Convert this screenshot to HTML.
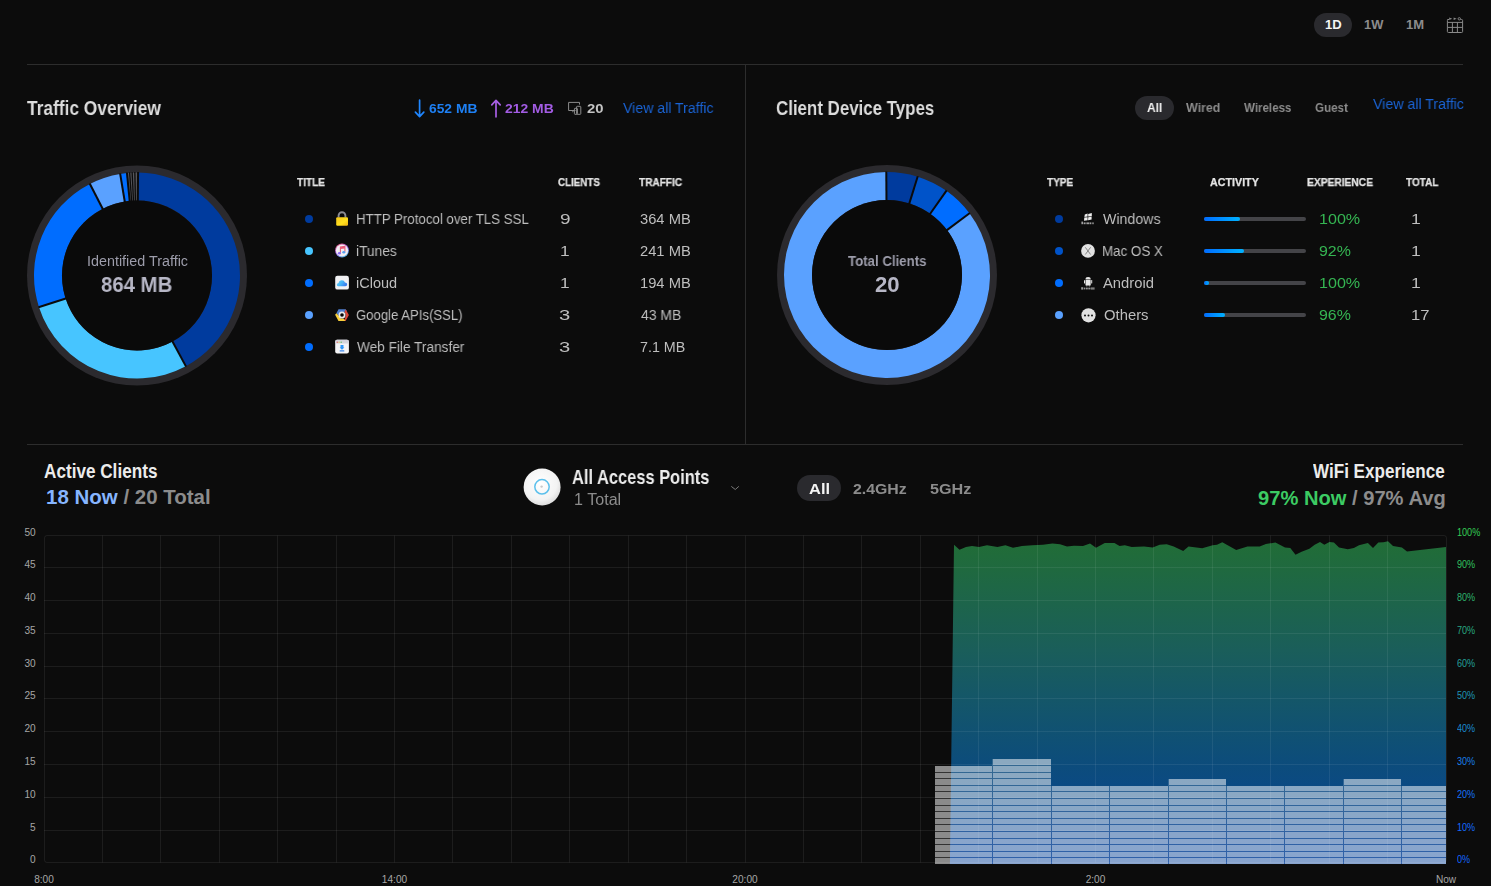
<!DOCTYPE html>
<html><head><meta charset="utf-8"><style>
html,body{margin:0;padding:0;background:#0c0c0c;width:1491px;height:886px;overflow:hidden}
body{position:relative;font-family:"Liberation Sans",sans-serif}
.t{position:absolute;white-space:nowrap;transform-origin:0 0}
.g{will-change:transform}
.hs{-webkit-text-stroke:0.25px #e4e4e4}
.a{position:absolute}
</style></head><body>

<div class="a" style="left:27px;top:64px;width:1436px;height:1px;background:#2d2d2d"></div>
<div class="a" style="left:27px;top:444px;width:1436px;height:1px;background:#2d2d2d"></div>
<div class="a" style="left:745px;top:65px;width:1px;height:379px;background:#2d2d2d"></div>
<div class="a" style="left:1314px;top:13px;width:38px;height:24px;border-radius:12px;background:#2a2a2e"></div>
<div class="a" style="left:1135px;top:96px;width:39px;height:24px;border-radius:12px;background:#2a2a2e"></div>
<div class="a" style="left:797px;top:475px;width:44px;height:26px;border-radius:13px;background:#2a2a2e"></div>
<svg class="a" style="left:22px;top:160px" width="230" height="230" viewBox="22 160 230 230"><circle cx="137.00" cy="275.50" r="110" fill="#2b2a2e"/><path d="M138.079 172.506 A103.000 103.000 0 0 1 185.831 366.189 L172.557 341.536 A75.000 75.000 0 0 0 137.785 200.504 Z" fill="#003b9e"/><path d="M185.831 366.189 A103.000 103.000 0 0 1 38.986 307.158 L65.630 298.552 A75.000 75.000 0 0 0 172.557 341.536 Z" fill="#47c5ff"/><path d="M38.986 307.158 A103.000 103.000 0 0 1 89.919 183.890 L102.718 208.794 A75.000 75.000 0 0 0 65.630 298.552 Z" fill="#006dff"/><path d="M89.919 183.890 A103.000 103.000 0 0 1 120.177 173.883 L124.751 201.507 A75.000 75.000 0 0 0 102.718 208.794 Z" fill="#5aa1ff"/><path d="M120.177 173.883 A103.000 103.000 0 0 1 126.949 172.992 L129.681 200.858 A75.000 75.000 0 0 0 124.751 201.507 Z" fill="#006dff"/><path d="M126.949 172.992 A103.000 103.000 0 0 1 138.079 172.506 L137.785 200.504 A75.000 75.000 0 0 0 129.681 200.858 Z" fill="#56565b"/><line x1="137.775" y1="201.504" x2="138.084" y2="172.006" stroke="#0b0b0b" stroke-width="2.00"/><line x1="172.083" y1="340.655" x2="186.068" y2="366.629" stroke="#0b0b0b" stroke-width="2.00"/><line x1="66.582" y1="298.244" x2="38.510" y2="307.311" stroke="#0b0b0b" stroke-width="2.00"/><line x1="103.175" y1="209.683" x2="89.690" y2="183.445" stroke="#0b0b0b" stroke-width="2.00"/><line x1="124.914" y1="202.494" x2="120.096" y2="173.390" stroke="#0b0b0b" stroke-width="2.00"/><line x1="129.779" y1="201.853" x2="126.900" y2="172.494" stroke="#0b0b0b" stroke-width="2.00"/><line x1="131.709" y1="201.689" x2="129.600" y2="172.265" stroke="#0b0b0b" stroke-width="1.30"/><line x1="133.514" y1="201.582" x2="132.124" y2="172.115" stroke="#0b0b0b" stroke-width="1.30"/><line x1="135.450" y1="201.516" x2="134.832" y2="172.023" stroke="#0b0b0b" stroke-width="1.30"/><circle cx="137.00" cy="275.50" r="75" fill="#0a0a0a"/></svg>
<svg class="a" style="left:772px;top:160px" width="230" height="230" viewBox="772 160 230 230"><circle cx="887.00" cy="275.00" r="110" fill="#2b2a2e"/><path d="M886.281 172.003 A103.000 103.000 0 0 1 917.630 176.660 L909.303 203.393 A75.000 75.000 0 0 0 886.476 200.002 Z" fill="#003b9e"/><path d="M917.630 176.660 A103.000 103.000 0 0 1 946.373 190.834 L930.232 213.714 A75.000 75.000 0 0 0 909.303 203.393 Z" fill="#0053c9"/><path d="M946.373 190.834 A103.000 103.000 0 0 1 969.475 213.301 L947.055 230.073 A75.000 75.000 0 0 0 930.232 213.714 Z" fill="#006dff"/><path d="M969.475 213.301 A103.000 103.000 0 1 1 886.281 172.003 L886.476 200.002 A75.000 75.000 0 1 0 947.055 230.073 Z" fill="#5aa1ff"/><line x1="886.483" y1="201.002" x2="886.277" y2="171.503" stroke="#0b0b0b" stroke-width="2.00"/><line x1="909.006" y1="204.348" x2="917.778" y2="176.182" stroke="#0b0b0b" stroke-width="2.00"/><line x1="929.656" y1="214.531" x2="946.661" y2="190.426" stroke="#0b0b0b" stroke-width="2.00"/><line x1="946.254" y1="230.672" x2="969.876" y2="213.001" stroke="#0b0b0b" stroke-width="2.00"/><circle cx="887.00" cy="275.00" r="75" fill="#0a0a0a"/></svg>
<div class="a" style="left:305px;top:215px;width:8px;height:8px;border-radius:50%;background:#003b9e"></div>
<div class="a" style="left:305px;top:247px;width:8px;height:8px;border-radius:50%;background:#47c5ff"></div>
<div class="a" style="left:305px;top:279px;width:8px;height:8px;border-radius:50%;background:#006dff"></div>
<div class="a" style="left:305px;top:311px;width:8px;height:8px;border-radius:50%;background:#5aa1ff"></div>
<div class="a" style="left:305px;top:343px;width:8px;height:8px;border-radius:50%;background:#006dff"></div>
<div class="a" style="left:1055px;top:215px;width:8px;height:8px;border-radius:50%;background:#003b9e"></div>
<div class="a" style="left:1055px;top:247px;width:8px;height:8px;border-radius:50%;background:#0053c9"></div>
<div class="a" style="left:1055px;top:279px;width:8px;height:8px;border-radius:50%;background:#006dff"></div>
<div class="a" style="left:1055px;top:311px;width:8px;height:8px;border-radius:50%;background:#5aa1ff"></div>
<div class="a" style="left:1204px;top:217px;width:102px;height:4px;border-radius:2px;background:#444448"></div>
<div class="a" style="left:1204px;top:217px;width:36px;height:4px;border-radius:2px;background:linear-gradient(90deg,#006cff,#00b2ff)"></div>
<div class="a" style="left:1204px;top:249px;width:102px;height:4px;border-radius:2px;background:#444448"></div>
<div class="a" style="left:1204px;top:249px;width:40px;height:4px;border-radius:2px;background:linear-gradient(90deg,#006cff,#00b2ff)"></div>
<div class="a" style="left:1204px;top:281px;width:102px;height:4px;border-radius:2px;background:#444448"></div>
<div class="a" style="left:1204px;top:281px;width:5px;height:4px;border-radius:2px;background:linear-gradient(90deg,#006cff,#00b2ff)"></div>
<div class="a" style="left:1204px;top:313px;width:102px;height:4px;border-radius:2px;background:#444448"></div>
<div class="a" style="left:1204px;top:313px;width:21px;height:4px;border-radius:2px;background:linear-gradient(90deg,#006cff,#00b2ff)"></div>
<svg class="a" style="left:0;top:0" width="1491" height="886" viewBox="0 0 1491 886"><defs><linearGradient id="ag" x1="0" y1="541" x2="0" y2="862" gradientUnits="userSpaceOnUse"><stop offset="0" stop-color="#216d36"/><stop offset="0.34" stop-color="#1a5e5a"/><stop offset="0.7" stop-color="#0c4c7c"/><stop offset="1" stop-color="#08429a"/></linearGradient></defs><path d="M949.9 864 L954.0 544.8 L959.5 549.7 L966.0 547.0 L972.0 546.0 L979.0 547.0 L987.0 545.3 L997.5 547.0 L1005.4 545.3 L1013.0 547.8 L1022.0 546.0 L1032.4 545.2 L1043.0 544.8 L1052.5 543.6 L1060.0 544.3 L1067.0 546.6 L1074.0 545.7 L1083.0 546.0 L1090.0 543.6 L1096.0 547.8 L1104.8 543.0 L1114.4 543.0 L1119.6 546.0 L1124.8 545.3 L1131.8 547.0 L1144.0 546.6 L1152.7 547.4 L1159.7 544.8 L1166.7 544.3 L1173.7 546.6 L1183.2 551.0 L1188.5 546.6 L1202.2 548.3 L1212.7 545.3 L1217.0 544.8 L1222.3 542.2 L1236.2 550.0 L1247.5 546.6 L1259.7 546.6 L1265.9 544.0 L1275.4 542.6 L1285.0 547.4 L1290.3 548.0 L1295.5 554.8 L1301.6 551.8 L1309.4 548.8 L1314.7 544.8 L1320.0 541.9 L1324.3 544.8 L1329.5 541.9 L1333.9 542.6 L1339.0 547.4 L1347.8 549.2 L1353.9 548.0 L1359.0 545.3 L1367.9 543.0 L1373.0 548.0 L1378.3 542.6 L1383.5 542.2 L1388.0 541.3 L1393.0 546.0 L1401.9 547.4 L1407.0 551.4 L1446.0 546.9 L1446 864 Z" fill="url(#ag)"/><path d="M935 766H992V864H935ZM992 759H1051V864H992ZM1051 786H1109V864H1051ZM1109 786H1168V864H1109ZM1168 779H1226V864H1168ZM1226 786H1284V864H1226ZM1284 786H1343V864H1284ZM1343 779H1401V864H1343ZM1401 786H1446V864H1401Z" fill="#ffffff" fill-opacity="0.16"/><path d="M935 858H992V864H935ZM935 852H992V857H935ZM935 845H992V851H935ZM935 839H992V844H935ZM935 832H992V838H935ZM935 825H992V831H935ZM935 819H992V824H935ZM935 812H992V818H935ZM935 806H992V811H935ZM935 799H992V805H935ZM935 792H992V798H935ZM935 786H992V791H935ZM935 779H992V785H935ZM935 773H992V778H935ZM935 766H992V772H935ZM993 858H1051V864H993ZM993 852H1051V857H993ZM993 845H1051V851H993ZM993 839H1051V844H993ZM993 832H1051V838H993ZM993 825H1051V831H993ZM993 819H1051V824H993ZM993 812H1051V818H993ZM993 806H1051V811H993ZM993 799H1051V805H993ZM993 792H1051V798H993ZM993 786H1051V791H993ZM993 779H1051V785H993ZM993 773H1051V778H993ZM993 766H1051V772H993ZM993 759H1051V765H993ZM1052 858H1109V864H1052ZM1052 852H1109V857H1052ZM1052 845H1109V851H1052ZM1052 839H1109V844H1052ZM1052 832H1109V838H1052ZM1052 825H1109V831H1052ZM1052 819H1109V824H1052ZM1052 812H1109V818H1052ZM1052 806H1109V811H1052ZM1052 799H1109V805H1052ZM1052 792H1109V798H1052ZM1052 786H1109V791H1052ZM1110 858H1168V864H1110ZM1110 852H1168V857H1110ZM1110 845H1168V851H1110ZM1110 839H1168V844H1110ZM1110 832H1168V838H1110ZM1110 825H1168V831H1110ZM1110 819H1168V824H1110ZM1110 812H1168V818H1110ZM1110 806H1168V811H1110ZM1110 799H1168V805H1110ZM1110 792H1168V798H1110ZM1110 786H1168V791H1110ZM1169 858H1226V864H1169ZM1169 852H1226V857H1169ZM1169 845H1226V851H1169ZM1169 839H1226V844H1169ZM1169 832H1226V838H1169ZM1169 825H1226V831H1169ZM1169 819H1226V824H1169ZM1169 812H1226V818H1169ZM1169 806H1226V811H1169ZM1169 799H1226V805H1169ZM1169 792H1226V798H1169ZM1169 786H1226V791H1169ZM1169 779H1226V785H1169ZM1227 858H1284V864H1227ZM1227 852H1284V857H1227ZM1227 845H1284V851H1227ZM1227 839H1284V844H1227ZM1227 832H1284V838H1227ZM1227 825H1284V831H1227ZM1227 819H1284V824H1227ZM1227 812H1284V818H1227ZM1227 806H1284V811H1227ZM1227 799H1284V805H1227ZM1227 792H1284V798H1227ZM1227 786H1284V791H1227ZM1285 858H1343V864H1285ZM1285 852H1343V857H1285ZM1285 845H1343V851H1285ZM1285 839H1343V844H1285ZM1285 832H1343V838H1285ZM1285 825H1343V831H1285ZM1285 819H1343V824H1285ZM1285 812H1343V818H1285ZM1285 806H1343V811H1285ZM1285 799H1343V805H1285ZM1285 792H1343V798H1285ZM1285 786H1343V791H1285ZM1344 858H1401V864H1344ZM1344 852H1401V857H1344ZM1344 845H1401V851H1344ZM1344 839H1401V844H1344ZM1344 832H1401V838H1344ZM1344 825H1401V831H1344ZM1344 819H1401V824H1344ZM1344 812H1401V818H1344ZM1344 806H1401V811H1344ZM1344 799H1401V805H1344ZM1344 792H1401V798H1344ZM1344 786H1401V791H1344ZM1344 779H1401V785H1344ZM1402 858H1446V864H1402ZM1402 852H1446V857H1402ZM1402 845H1446V851H1402ZM1402 839H1446V844H1402ZM1402 832H1446V838H1402ZM1402 825H1446V831H1402ZM1402 819H1446V824H1402ZM1402 812H1446V818H1402ZM1402 806H1446V811H1402ZM1402 799H1446V805H1402ZM1402 792H1446V798H1402ZM1402 786H1446V791H1402Z" fill="#ffffff" fill-opacity="0.43"/><path d="M44.00 567.50H1446.00M44.00 600.50H1446.00M44.00 633.50H1446.00M44.00 666.50H1446.00M44.00 698.50H1446.00M44.00 731.50H1446.00M44.00 764.50H1446.00M44.00 797.50H1446.00M44.00 830.50H1446.00M102.50 535.50V862.50M160.50 535.50V862.50M219.50 535.50V862.50M277.50 535.50V862.50M336.50 535.50V862.50M394.50 535.50V862.50M452.50 535.50V862.50M511.50 535.50V862.50M569.50 535.50V862.50M628.50 535.50V862.50M686.50 535.50V862.50M745.50 535.50V862.50M803.50 535.50V862.50M861.50 535.50V862.50M920.50 535.50V862.50M978.50 535.50V862.50M1037.50 535.50V862.50M1095.50 535.50V862.50M1153.50 535.50V862.50M1212.50 535.50V862.50M1270.50 535.50V862.50M1329.50 535.50V862.50M1387.50 535.50V862.50" stroke="#ffffff" stroke-opacity="0.07" stroke-width="1" fill="none"/><rect x="44.50" y="535.50" width="1402.00" height="327.00" rx="2.5" fill="none" stroke="#ffffff" stroke-width="1" stroke-opacity="0.07"/></svg>
<div style="font-size:10.1px;line-height:12px;position:absolute;white-space:nowrap;right:1455.4px;top:527px;color:#a6a6a6">50</div>
<div style="font-size:10.1px;line-height:12px;position:absolute;white-space:nowrap;right:1455.4px;top:559px;color:#a6a6a6">45</div>
<div style="font-size:10.1px;line-height:12px;position:absolute;white-space:nowrap;right:1455.4px;top:592px;color:#a6a6a6">40</div>
<div style="font-size:10.1px;line-height:12px;position:absolute;white-space:nowrap;right:1455.4px;top:625px;color:#a6a6a6">35</div>
<div style="font-size:10.1px;line-height:12px;position:absolute;white-space:nowrap;right:1455.4px;top:658px;color:#a6a6a6">30</div>
<div style="font-size:10.1px;line-height:12px;position:absolute;white-space:nowrap;right:1455.4px;top:690px;color:#a6a6a6">25</div>
<div style="font-size:10.1px;line-height:12px;position:absolute;white-space:nowrap;right:1455.4px;top:723px;color:#a6a6a6">20</div>
<div style="font-size:10.1px;line-height:12px;position:absolute;white-space:nowrap;right:1455.4px;top:756px;color:#a6a6a6">15</div>
<div style="font-size:10.1px;line-height:12px;position:absolute;white-space:nowrap;right:1455.4px;top:789px;color:#a6a6a6">10</div>
<div style="font-size:10.1px;line-height:12px;position:absolute;white-space:nowrap;right:1455.4px;top:822px;color:#a6a6a6">5</div>
<div style="font-size:10.1px;line-height:12px;position:absolute;white-space:nowrap;right:1455.4px;top:854px;color:#a6a6a6">0</div>
<div style="font-size:10.1px;line-height:12px;position:absolute;white-space:nowrap;left:1457px;top:527px;color:#34cc55;transform:scaleX(0.9);transform-origin:0 0">100%</div>
<div style="font-size:10.1px;line-height:12px;position:absolute;white-space:nowrap;left:1457px;top:559px;color:#30c060;transform:scaleX(0.9);transform-origin:0 0">90%</div>
<div style="font-size:10.1px;line-height:12px;position:absolute;white-space:nowrap;left:1457px;top:592px;color:#2cb36e;transform:scaleX(0.9);transform-origin:0 0">80%</div>
<div style="font-size:10.1px;line-height:12px;position:absolute;white-space:nowrap;left:1457px;top:625px;color:#28a782;transform:scaleX(0.9);transform-origin:0 0">70%</div>
<div style="font-size:10.1px;line-height:12px;position:absolute;white-space:nowrap;left:1457px;top:658px;color:#229e9a;transform:scaleX(0.9);transform-origin:0 0">60%</div>
<div style="font-size:10.1px;line-height:12px;position:absolute;white-space:nowrap;left:1457px;top:690px;color:#1e95b6;transform:scaleX(0.9);transform-origin:0 0">50%</div>
<div style="font-size:10.1px;line-height:12px;position:absolute;white-space:nowrap;left:1457px;top:723px;color:#1a89d2;transform:scaleX(0.9);transform-origin:0 0">40%</div>
<div style="font-size:10.1px;line-height:12px;position:absolute;white-space:nowrap;left:1457px;top:756px;color:#187de8;transform:scaleX(0.9);transform-origin:0 0">30%</div>
<div style="font-size:10.1px;line-height:12px;position:absolute;white-space:nowrap;left:1457px;top:789px;color:#1672f8;transform:scaleX(0.9);transform-origin:0 0">20%</div>
<div style="font-size:10.1px;line-height:12px;position:absolute;white-space:nowrap;left:1457px;top:822px;color:#146aff;transform:scaleX(0.9);transform-origin:0 0">10%</div>
<div style="font-size:10.1px;line-height:12px;position:absolute;white-space:nowrap;left:1457px;top:854px;color:#1264ff;transform:scaleX(0.9);transform-origin:0 0">0%</div>
<div style="font-size:10.1px;line-height:12px;position:absolute;white-space:nowrap;left:14.0px;top:874px;width:60px;text-align:center;color:#a6a6a6">8:00</div>
<div style="font-size:10.1px;line-height:12px;position:absolute;white-space:nowrap;left:364.5px;top:874px;width:60px;text-align:center;color:#a6a6a6">14:00</div>
<div style="font-size:10.1px;line-height:12px;position:absolute;white-space:nowrap;left:715.0px;top:874px;width:60px;text-align:center;color:#a6a6a6">20:00</div>
<div style="font-size:10.1px;line-height:12px;position:absolute;white-space:nowrap;left:1065.5px;top:874px;width:60px;text-align:center;color:#a6a6a6">2:00</div>
<div style="font-size:10.1px;line-height:12px;position:absolute;white-space:nowrap;left:1416.0px;top:874px;width:60px;text-align:center;color:#a6a6a6">Now</div>
<svg class="a" style="left:1444px;top:14px" width="22" height="22" viewBox="0 0 22 22"><g fill="none" stroke="#8a8a8a" stroke-width="1"><path d="M5 5.5H3.5Q3.4 5.5 3.4 6.6V17.6Q3.4 18.5 4.5 18.5H17.6Q18.6 18.5 18.6 17.5V6.5Q18.6 5.5 17.6 5.5H16.5"/><path d="M4 8.4H18.5M4 13.4H18.5M8.4 8.4V18.4M13.4 8.4V18.4"/></g><g fill="#8a8a8a"><path d="M5.2 3.6L8.2 4.7L5.2 5.9Z"/><path d="M9.6 3.6L12.6 4.7L9.6 5.9Z"/><circle cx="15.3" cy="4.8" r="1.2" fill="none" stroke="#8a8a8a" stroke-width="0.9"/></g></svg>
<svg class="a" style="left:410px;top:96px" width="20" height="24" viewBox="0 0 20 24"><path d="M9.6 4.2V20.4M5.4 16.2L9.6 20.6L13.8 16.2" fill="none" stroke="#1f86ff" stroke-width="1.7" stroke-linecap="round" stroke-linejoin="round"/></svg>
<svg class="a" style="left:486px;top:96px" width="20" height="24" viewBox="0 0 20 24"><path d="M10 20.8V4.6M5.8 8.8L10 4.4L14.2 8.8" fill="none" stroke="#a95fe6" stroke-width="1.7" stroke-linecap="round" stroke-linejoin="round"/></svg>
<svg class="a" style="left:564px;top:98px" width="22" height="22" viewBox="0 0 22 22"><g fill="none" stroke="#8c8c8c" stroke-width="1"><path d="M11.5 12.5H4.6V4.4H15.5V6.6"/><path d="M8.6 14.2L9.2 12.8"/><rect x="10.4" y="10.3" width="3" height="6" rx="0.6"/><rect x="12.6" y="8.3" width="4.2" height="8" rx="0.6"/></g></svg>
<svg class="a" style="left:332px;top:208px" width="20" height="20" viewBox="0 0 20 20"><path d="M6.6 9.6V7.6A3.4 3.4 0 0 1 13.4 7.6V9.6" fill="none" stroke="#8b8b92" stroke-width="1.9"/><defs><linearGradient id="lk" x1="0" y1="0" x2="1" y2="1"><stop offset="0" stop-color="#f8c81a"/><stop offset="0.6" stop-color="#ffe01e"/><stop offset="1" stop-color="#f0b010"/></linearGradient></defs><rect x="4.2" y="9.2" width="11.8" height="8.6" rx="1.2" fill="url(#lk)"/></svg>
<svg class="a" style="left:332px;top:240px" width="20" height="20" viewBox="0 0 20 20"><defs><linearGradient id="it" x1="0.2" y1="0" x2="0.8" y2="1"><stop offset="0" stop-color="#f06080"/><stop offset="0.5" stop-color="#9a60f0"/><stop offset="1" stop-color="#40c0e0"/></linearGradient></defs><circle cx="10" cy="10.5" r="6.9" fill="url(#it)"/><circle cx="10" cy="10.5" r="6.1" fill="#f2eef4"/><path d="M8.4 12.8V6.9L12.9 6.3V11.8" fill="none" stroke="#e5607a" stroke-width="1.1"/><path d="M8.2 7.2L12.9 6.5V8.5L8.4 9.1Z" fill="#ee5a78"/><ellipse cx="7.4" cy="13.2" rx="1.5" ry="1.2" fill="#8a68f4"/><ellipse cx="11.8" cy="12.2" rx="1.5" ry="1.2" fill="#58a0f0"/></svg>
<svg class="a" style="left:332px;top:272px" width="20" height="20" viewBox="0 0 20 20"><defs><linearGradient id="ic" x1="0" y1="0" x2="1" y2="0.4"><stop offset="0" stop-color="#6ad0f8"/><stop offset="0.5" stop-color="#46b8f8"/><stop offset="1" stop-color="#3a7ff0"/></linearGradient></defs><rect x="3.2" y="3.8" width="13.7" height="13.8" rx="2.2" fill="#f1f1f3"/><path d="M6.2 14.2Q4.6 14.2 4.8 12.5Q5 11.2 6.6 11.1Q7 8.4 9.9 8.3Q12.2 8.3 13 10.6Q15.2 10.6 15.2 12.4Q15.2 14.2 13.3 14.2Z" fill="url(#ic)"/></svg>
<svg class="a" style="left:332px;top:304px" width="20" height="20" viewBox="0 0 20 20"><path d="M6.5 5.2H13.6L15.2 7.6L11.4 7.9L8.7 8.4L6.4 11.2L4.4 9.2Z" fill="#4e7fd0"/><path d="M13.6 5.2L16.9 11L13.6 16.9H11.4L12.9 14.5L13.9 11L12.6 7.9Z" fill="#d84638"/><path d="M3.1 10.8L4.4 9.2L6.6 11.6L8.8 14.6L11.4 14.5L13.4 16.9H6.5Z" fill="#f9cf3a"/><circle cx="10" cy="11" r="3.5" fill="#e8e8ea"/><circle cx="10" cy="11" r="1.8" fill="#050505"/></svg>
<svg class="a" style="left:332px;top:336px" width="20" height="20" viewBox="0 0 20 20"><rect x="3.2" y="3.8" width="13.7" height="13.8" rx="2" fill="#f4f4f6"/><rect x="3.2" y="3.8" width="13.7" height="3.6" rx="1.5" fill="#d4d4dc"/><circle cx="5.3" cy="6.3" r="0.8" fill="#e57373"/><circle cx="7.2" cy="6.3" r="0.8" fill="#e8d070"/><circle cx="9.2" cy="6.3" r="0.8" fill="#70c070"/><path d="M8.5 9H11.5V11.6H12.4L10 13.8L7.6 11.6H8.5Z" fill="#2f96f6"/><rect x="7.6" y="14.3" width="4.8" height="1.1" rx="0.5" fill="#3a88f0"/></svg>
<svg class="a" style="left:1078px;top:208px" width="20" height="20" viewBox="0 0 20 20"><path d="M6.8 6.4L9.6 5.6V8.6L6.4 9Z M10.2 5.9L13.8 5V8.2L10.2 8.6Z M6.3 9.6L9.6 9.2V12.2L6 12.7Z M10.2 9.2L13.6 8.8V11.6L10.1 12.2Z" fill="#f0f0f0"/><g fill="#a0a0a0"><rect x="3.4" y="13.6" width="1.6" height="2.6"/><rect x="5.6" y="14.4" width="1.4" height="1.8"/><rect x="7.4" y="14.4" width="1.2" height="1.8"/><rect x="9" y="14.4" width="2" height="1.8"/><rect x="11.5" y="14.4" width="1.6" height="1.8"/><rect x="13.6" y="14.4" width="2.4" height="1.8" opacity="0.7"/></g></svg>
<svg class="a" style="left:1078px;top:240px" width="20" height="20" viewBox="0 0 20 20"><circle cx="10" cy="10.9" r="6.9" fill="#e2e2e2"/><path d="M7.3 7.3L12.6 14.5M12.6 7.3L7.3 14.5" stroke="#7a7a7a" stroke-width="0.9"/></svg>
<svg class="a" style="left:1078px;top:272px" width="20" height="20" viewBox="0 0 20 20"><path d="M7.5 7.4A2.6 2.4 0 0 1 12.7 7.4Z" fill="#e8e8e8"/><rect x="7.5" y="8" width="5.2" height="5.6" rx="0.5" fill="#e8e8e8"/><rect x="6" y="8" width="1" height="3.6" rx="0.5" fill="#e8e8e8"/><rect x="13.2" y="8" width="1" height="3.6" rx="0.5" fill="#e8e8e8"/><rect x="8.3" y="13.2" width="1" height="1.2" fill="#bbb"/><rect x="10.9" y="13.2" width="1" height="1.2" fill="#bbb"/><g fill="#9a9a9a"><rect x="3.2" y="15.2" width="2" height="2.4"/><rect x="5.8" y="15.6" width="1.6" height="1.8"/><rect x="8" y="15.6" width="1.8" height="1.8"/><rect x="10.3" y="15.6" width="2.2" height="1.8"/><rect x="13" y="15.4" width="3.6" height="2.2" opacity="0.8"/></g></svg>
<svg class="a" style="left:1078px;top:304px" width="20" height="20" viewBox="0 0 20 20"><circle cx="10.5" cy="11.3" r="7.1" fill="#e2e2e2"/><circle cx="7" cy="11.5" r="1" fill="#111"/><circle cx="10.5" cy="11.5" r="1" fill="#111"/><circle cx="14" cy="11.5" r="1" fill="#111"/></svg>
<svg class="a" style="left:518px;top:463px" width="48" height="48" viewBox="0 0 48 48"><defs><radialGradient id="ap" cx="0.45" cy="0.4" r="0.6"><stop offset="0" stop-color="#ffffff"/><stop offset="0.75" stop-color="#f3f3f3"/><stop offset="1" stop-color="#dedede"/></radialGradient></defs><circle cx="24.1" cy="24" r="18.5" fill="url(#ap)"/><circle cx="24" cy="23.8" r="7.2" fill="none" stroke="#5cc0ec" stroke-width="1.5"/><circle cx="23.6" cy="23.6" r="1.2" fill="#c8c8c8"/></svg>
<svg class="a" style="left:725px;top:478px" width="20" height="20" viewBox="0 0 20 20"><path d="M6.3 8.4L10.3 11.5L13.8 8.4" fill="none" stroke="#7a7a7a" stroke-width="1"/></svg>
<div class="t" style="left:1324.93px;top:19.00px;font-size:12.209px;line-height:12.209px;font-weight:700;color:#f4f4f4;transform:scaleX(1.0714)">1D</div>
<div class="t" style="left:1363.94px;top:19.00px;font-size:12.209px;line-height:12.209px;font-weight:700;color:#8c8c8c;transform:scaleX(1.0588)">1W</div>
<div class="t" style="left:1405.93px;top:19.00px;font-size:12.209px;line-height:12.209px;font-weight:700;color:#8c8c8c;transform:scaleX(1.0667)">1M</div>
<div class="t g" style="left:27.00px;top:98.00px;font-size:20.640px;line-height:20.640px;font-weight:700;color:#dcdcdc;transform:scaleX(0.8403)">Traffic Overview</div>
<div class="t g" style="left:429.20px;top:102.00px;font-size:13.517px;line-height:13.517px;font-weight:700;color:#1e80f4;transform:scaleX(1.0234)">652 MB</div>
<div class="t g" style="left:505.00px;top:102.00px;font-size:13.517px;line-height:13.517px;font-weight:700;color:#a35ce4;transform:scaleX(1.0298)">212 MB</div>
<div class="t g" style="left:587.00px;top:102.00px;font-size:13.517px;line-height:13.517px;font-weight:700;color:#c4c4c4;transform:scaleX(1.1000)">20</div>
<div class="t g" style="left:623.30px;top:101.00px;font-size:14.826px;line-height:14.826px;font-weight:400;color:#1a63d4;transform:scaleX(0.9532)">View all Traffic</div>
<div class="t g" style="left:776.18px;top:98.00px;font-size:20.640px;line-height:20.640px;font-weight:700;color:#dcdcdc;transform:scaleX(0.8188)">Client Device Types</div>
<div class="t g" style="left:1147.00px;top:102.00px;font-size:12.791px;line-height:12.791px;font-weight:700;color:#f4f4f4;transform:scaleX(0.9375)">All</div>
<div class="t g" style="left:1186.00px;top:102.00px;font-size:12.791px;line-height:12.791px;font-weight:700;color:#8c8c8c;transform:scaleX(0.9714)">Wired</div>
<div class="t g" style="left:1244.40px;top:102.00px;font-size:12.791px;line-height:12.791px;font-weight:700;color:#8c8c8c;transform:scaleX(0.9038)">Wireless</div>
<div class="t g" style="left:1315.00px;top:102.00px;font-size:12.791px;line-height:12.791px;font-weight:700;color:#8c8c8c;transform:scaleX(0.9083)">Guest</div>
<div class="t g" style="left:1373.00px;top:97.00px;font-size:14.826px;line-height:14.826px;font-weight:400;color:#1a63d4;transform:scaleX(0.9574)">View all Traffic</div>
<div class="t g hs" style="left:297.30px;top:178.00px;font-size:10.465px;line-height:10.465px;font-weight:700;color:#e4e4e4;transform:scaleX(0.9621)">TITLE</div>
<div class="t g hs" style="left:558.00px;top:178.00px;font-size:10.465px;line-height:10.465px;font-weight:700;color:#e4e4e4;transform:scaleX(0.9378)">CLIENTS</div>
<div class="t g hs" style="left:638.70px;top:178.00px;font-size:10.465px;line-height:10.465px;font-weight:700;color:#e4e4e4;transform:scaleX(0.9614)">TRAFFIC</div>
<div class="t g hs" style="left:1047.40px;top:178.00px;font-size:10.465px;line-height:10.465px;font-weight:700;color:#e4e4e4;transform:scaleX(0.9593)">TYPE</div>
<div class="t g hs" style="left:1210.00px;top:178.00px;font-size:10.465px;line-height:10.465px;font-weight:700;color:#e4e4e4;transform:scaleX(1.0250)">ACTIVITY</div>
<div class="t g hs" style="left:1307.22px;top:178.00px;font-size:10.465px;line-height:10.465px;font-weight:700;color:#e4e4e4;transform:scaleX(0.9788)">EXPERIENCE</div>
<div class="t g hs" style="left:1406.00px;top:178.00px;font-size:10.465px;line-height:10.465px;font-weight:700;color:#e4e4e4;transform:scaleX(0.9559)">TOTAL</div>
<div class="t g" style="left:356.07px;top:212.00px;font-size:14.244px;line-height:14.244px;font-weight:400;color:#bebebe;transform:scaleX(0.9321)">HTTP Protocol over TLS SSL</div>
<div class="t g" style="left:559.67px;top:212.00px;font-size:14.244px;line-height:14.244px;font-weight:400;color:#bebebe;transform:scaleX(1.3333)">9</div>
<div class="t g" style="left:640.27px;top:212.00px;font-size:14.244px;line-height:14.244px;font-weight:400;color:#bebebe;transform:scaleX(1.0340)">364 MB</div>
<div class="t g" style="left:356.03px;top:244.00px;font-size:14.244px;line-height:14.244px;font-weight:400;color:#bebebe;transform:scaleX(0.9659)">iTunes</div>
<div class="t g" style="left:560.08px;top:244.00px;font-size:14.244px;line-height:14.244px;font-weight:400;color:#bebebe;transform:scaleX(1.2167)">1</div>
<div class="t g" style="left:640.27px;top:244.00px;font-size:14.244px;line-height:14.244px;font-weight:400;color:#bebebe;transform:scaleX(1.0340)">241 MB</div>
<div class="t g" style="left:355.98px;top:276.00px;font-size:14.244px;line-height:14.244px;font-weight:400;color:#bebebe;transform:scaleX(1.0205)">iCloud</div>
<div class="t g" style="left:560.08px;top:276.00px;font-size:14.244px;line-height:14.244px;font-weight:400;color:#bebebe;transform:scaleX(1.2167)">1</div>
<div class="t g" style="left:640.27px;top:276.00px;font-size:14.244px;line-height:14.244px;font-weight:400;color:#bebebe;transform:scaleX(1.0340)">194 MB</div>
<div class="t g" style="left:356.08px;top:308.00px;font-size:14.244px;line-height:14.244px;font-weight:400;color:#bebebe;transform:scaleX(0.9228)">Google APIs(SSL)</div>
<div class="t g" style="left:559.28px;top:308.00px;font-size:14.244px;line-height:14.244px;font-weight:400;color:#bebebe;transform:scaleX(1.4167)">3</div>
<div class="t g" style="left:641.30px;top:308.00px;font-size:14.244px;line-height:14.244px;font-weight:400;color:#bebebe;transform:scaleX(0.9780)">43 MB</div>
<div class="t g" style="left:357.00px;top:340.00px;font-size:14.244px;line-height:14.244px;font-weight:400;color:#bebebe;transform:scaleX(0.9580)">Web File Transfer</div>
<div class="t g" style="left:559.28px;top:340.00px;font-size:14.244px;line-height:14.244px;font-weight:400;color:#bebebe;transform:scaleX(1.4167)">3</div>
<div class="t g" style="left:640.30px;top:340.00px;font-size:14.244px;line-height:14.244px;font-weight:400;color:#bebebe;transform:scaleX(1.0047)">7.1 MB</div>
<div class="t g" style="left:1103.00px;top:212.00px;font-size:14.244px;line-height:14.244px;font-weight:400;color:#bebebe;transform:scaleX(0.9948)">Windows</div>
<div class="t g" style="left:1318.87px;top:212.00px;font-size:14.244px;line-height:14.244px;font-weight:400;color:#35b552;transform:scaleX(1.1314)">100%</div>
<div class="t g" style="left:1411.17px;top:212.00px;font-size:14.244px;line-height:14.244px;font-weight:400;color:#bebebe;transform:scaleX(1.2333)">1</div>
<div class="t g" style="left:1102.26px;top:244.00px;font-size:14.244px;line-height:14.244px;font-weight:400;color:#bebebe;transform:scaleX(0.9397)">Mac OS X</div>
<div class="t g" style="left:1318.88px;top:244.00px;font-size:14.244px;line-height:14.244px;font-weight:400;color:#35b552;transform:scaleX(1.1185)">92%</div>
<div class="t g" style="left:1411.17px;top:244.00px;font-size:14.244px;line-height:14.244px;font-weight:400;color:#bebebe;transform:scaleX(1.2333)">1</div>
<div class="t g" style="left:1103.00px;top:276.00px;font-size:14.244px;line-height:14.244px;font-weight:400;color:#bebebe;transform:scaleX(1.0396)">Android</div>
<div class="t g" style="left:1318.87px;top:276.00px;font-size:14.244px;line-height:14.244px;font-weight:400;color:#35b552;transform:scaleX(1.1314)">100%</div>
<div class="t g" style="left:1411.17px;top:276.00px;font-size:14.244px;line-height:14.244px;font-weight:400;color:#bebebe;transform:scaleX(1.2333)">1</div>
<div class="t g" style="left:1104.26px;top:308.00px;font-size:14.244px;line-height:14.244px;font-weight:400;color:#bebebe;transform:scaleX(1.0415)">Others</div>
<div class="t g" style="left:1318.88px;top:308.00px;font-size:14.244px;line-height:14.244px;font-weight:400;color:#35b552;transform:scaleX(1.1185)">96%</div>
<div class="t g" style="left:1411.03px;top:308.00px;font-size:14.244px;line-height:14.244px;font-weight:400;color:#bebebe;transform:scaleX(1.1714)">17</div>
<div class="t g" style="left:86.59px;top:254.00px;font-size:14.244px;line-height:14.244px;font-weight:400;color:#9d9dab;transform:scaleX(1.0081)">Identified Traffic</div>
<div class="t g" style="left:101.16px;top:274.00px;font-size:21.657px;line-height:21.657px;font-weight:700;color:#b7b7c6;transform:scaleX(0.9405)">864 MB</div>
<div class="t g" style="left:848.10px;top:254.00px;font-size:14.244px;line-height:14.244px;font-weight:700;color:#9d9dab;transform:scaleX(0.9298)">Total Clients</div>
<div class="t g" style="left:874.88px;top:274.00px;font-size:21.657px;line-height:21.657px;font-weight:700;color:#b7b7c6;transform:scaleX(1.0227)">20</div>
<div class="t" style="left:44.24px;top:462.00px;font-size:19.913px;line-height:19.913px;font-weight:700;color:#ececec;transform:scaleX(0.8615)">Active Clients</div>
<div class="t" style="left:45.63px;top:486.00px;font-size:21.076px;line-height:21.076px;font-weight:700;color:#8c8c8c;transform:scaleX(0.9725)"><span style="color:#86b5ff">18 Now</span> / 20 Total</div>
<div class="t g" style="left:572.47px;top:468.00px;font-size:19.767px;line-height:19.767px;font-weight:700;color:#ececec;transform:scaleX(0.8325)">All Access Points</div>
<div class="t g" style="left:573.59px;top:492.00px;font-size:15.988px;line-height:15.988px;font-weight:400;color:#8c8c8c;transform:scaleX(1.0089)">1 Total</div>
<div class="t g" style="left:808.80px;top:481.00px;font-size:15.552px;line-height:15.552px;font-weight:700;color:#f4f4f4;transform:scaleX(1.0579)">All</div>
<div class="t g" style="left:853.00px;top:481.00px;font-size:15.552px;line-height:15.552px;font-weight:700;color:#8c8c8c;transform:scaleX(1.0192)">2.4GHz</div>
<div class="t g" style="left:929.76px;top:481.00px;font-size:15.552px;line-height:15.552px;font-weight:700;color:#8c8c8c;transform:scaleX(1.0421)">5GHz</div>
<div class="t" style="left:1313.40px;top:462.00px;font-size:19.331px;line-height:19.331px;font-weight:700;color:#ececec;transform:scaleX(0.8832)">WiFi Experience</div>
<div class="t" style="left:1258.24px;top:488.00px;font-size:20.930px;line-height:20.930px;font-weight:700;color:#8c8c8c;transform:scaleX(0.9627)"><span style="color:#3ccb63">97% Now</span> / 97% Avg</div>
</body></html>
